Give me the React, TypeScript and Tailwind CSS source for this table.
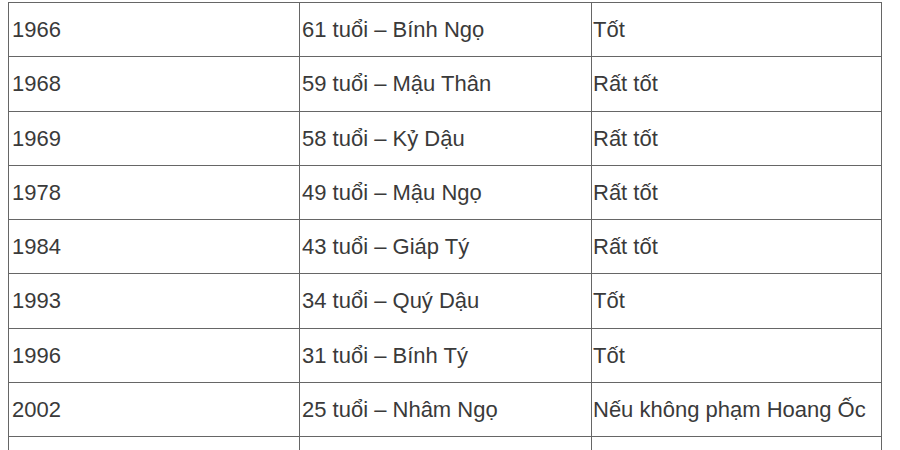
import React from "react";

const rows = [
  ["1966", "61 tuổi – Bính Ngọ", "Tốt"],
  ["1968", "59 tuổi – Mậu Thân", "Rất tốt"],
  ["1969", "58 tuổi – Kỷ Dậu", "Rất tốt"],
  ["1978", "49 tuổi – Mậu Ngọ", "Rất tốt"],
  ["1984", "43 tuổi – Giáp Tý", "Rất tốt"],
  ["1993", "34 tuổi – Quý Dậu", "Tốt"],
  ["1996", "31 tuổi – Bính Tý", "Tốt"],
  ["2002", "25 tuổi – Nhâm Ngọ", "Nếu không phạm Hoang Ốc"],
  ["", "", ""],
];

export default function App() {
  return (
    <div
      className="w-[900px] h-[450px] overflow-hidden bg-white pt-[2px] pl-[8px] text-[#3a3a3a] text-[22px]"
      style={{ fontFamily: '"Liberation Sans", Arial, sans-serif' }}
    >
      <div className="w-[874px] border-t border-l border-[#666]">
        {rows.map((r, i) => (
          <div key={i} className="flex h-[54.25px] border-b border-[#666]">
            <div className="w-[291px] flex items-center pl-[3px] border-r border-[#666]">
              {r[0]}
            </div>
            <div className="w-[292px] flex items-center pl-[2px] border-r border-[#666]">
              {r[1]}
            </div>
            <div className="w-[290px] flex items-center pl-[1px] border-r border-[#666]">
              {r[2]}
            </div>
          </div>
        ))}
      </div>
    </div>
  );
}
